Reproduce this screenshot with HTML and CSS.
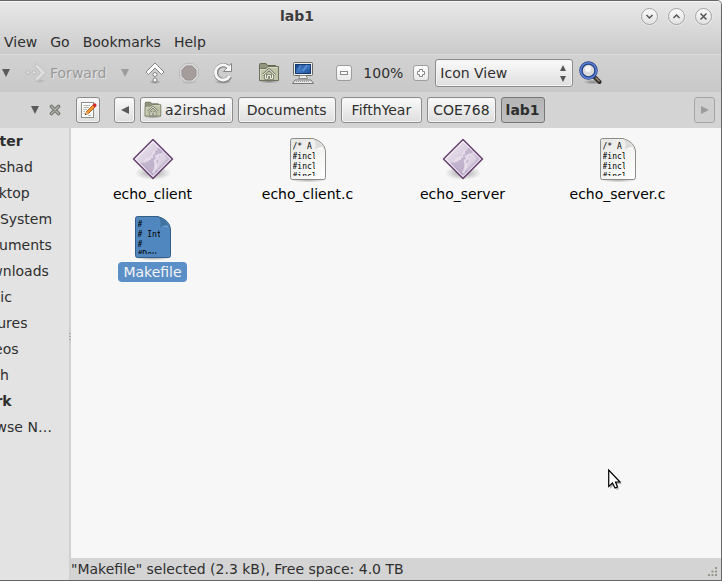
FILE: index.html
```html
<!DOCTYPE html>
<html lang="en">
<head>
<meta charset="utf-8">
<title>lab1</title>
<link rel="stylesheet" href="styles.css">
</head>
<body>
<svg class="defs" width="0" height="0" aria-hidden="true">
  <defs>
    <linearGradient id="paper" x1="0" y1="0" x2="1" y2="1"><stop offset="0" stop-color="#e6e7e4"/><stop offset="1" stop-color="#fff"/></linearGradient>
    <linearGradient id="gem" x1="0" y1="0" x2="1" y2="1"><stop offset="0" stop-color="#f3eff5"/><stop offset=".5" stop-color="#d5c9dd"/><stop offset="1" stop-color="#b39fc0"/></linearGradient>
    <linearGradient id="screen" x1="0" y1="0" x2="1" y2="1"><stop offset="0" stop-color="#143f83"/><stop offset=".5" stop-color="#3d78c4"/><stop offset="1" stop-color="#1b4c96"/></linearGradient>
    <radialGradient id="shade"><stop offset="0" stop-color="#000" stop-opacity=".35"/><stop offset="1" stop-color="#000" stop-opacity="0"/></radialGradient>
    <symbol id="down" viewBox="0 0 8 8"><path d="M0 0H8L4 8Z"/></symbol>
    <symbol id="folder" viewBox="0 0 22 22">
      <ellipse cx="11" cy="19.500" rx="11" ry="2" fill="url(#shade)"/>
      <path d="M1.500 18.500V2.500Q1.500 1.500 2.500 1.500H8L9.500 3.500H17.500V8" fill="#92957d" stroke="#64684f"/>
      <path d="M1.500 18.500V7.500Q1.500 6.500 2.500 6.500H8L10 4.500H20.500V18.500Z" fill="#bfc3a8" stroke="#6e735a"/>
      <path d="M2.500 17.500V7.500H8.500L10.500 5.500H19.500" fill="none" stroke="#d9dcc8"/>
      <path d="M5 13L11 7.500L17 13M7.500 12.500V16.500H9.500V13.500H12.500V16.500H14.500V12.500" fill="none" stroke="#7d816b" stroke-width="2.600"/>
      <path d="M5 13L11 7.500L17 13M7.500 12.500V16.500H9.500V13.500H12.500V16.500H14.500V12.500" fill="none" stroke="#f2f3ea"/>
    </symbol>
    <symbol id="program" viewBox="0 0 48 48">
      <ellipse cx="24" cy="37" rx="18" ry="7" fill="url(#shade)"/>
      <path d="M24 3.500L43.500 23L24 42.500L4.500 23Z" fill="url(#gem)" stroke="#65416f" stroke-width="1.500" stroke-linejoin="round"/>
      <path d="M13 27L17 22L22 20L25 14L30 13L34 17L38 23L30 31L24 38L17 31Z" fill="#fff" opacity=".3"/>
      <path d="M11 27l2 0 1-1 2 1 1-2 2 1 1-2 2 0 0-2 2 0 0-3 2-1 0-3 2-1 1-2 2 0 1 2 2 0 0 2-3 2 0 3-2 2 0 3-2 2-1 3 1 3 2 1-6 4-7-7Z" fill="#8a70a0" opacity=".35"/>
      <path d="M26 20q3 1 5-2M24 37q4-6 2-12q2-3 4-4" fill="none" stroke="#f5f0f8" stroke-width="2.500" opacity=".65"/>
      <path d="M24 5.500L41.500 23L24 40.500L6.500 23Z" fill="none" stroke="#fff" stroke-opacity=".75"/>
    </symbol>
    <symbol id="source" viewBox="0 0 38 46">
      <ellipse cx="19" cy="42.500" rx="19" ry="3" fill="url(#shade)"/>
      <path d="M3.500 1.500H24Q35.500 5 36.500 14V40.500Q36.500 42.500 34.500 42.500H3.500Q1.500 42.500 1.500 40.500V3.500Q1.500 1.500 3.500 1.500Z" fill="url(#paper)" stroke="#8b8d88"/>
      <path d="M24.500 2Q28 6 26 12.500Q32 11 36 14.500Q33 5 24.500 2Z" fill="#dcddda"/>
      <path d="M26 12.500Q32 11 36 14.500L33 10Q30 10 26 12.500Z" fill="#fff"/>
    </symbol>
  </defs>
</svg>
<div class="window">
  <header class="titlebar">
    <h1>lab1</h1>
    <div class="controls">
      <button aria-label="Minimize"><svg width="9" height="9"><path d="M1.500 3L4.500 6L7.500 3"/></svg></button>
      <button aria-label="Maximize"><svg width="9" height="9"><path d="M1.500 6L4.500 3L7.500 6"/></svg></button>
      <button aria-label="Close"><svg width="9" height="9"><path d="M1.500 1.500L7.500 7.500M7.500 1.500L1.500 7.500"/></svg></button>
    </div>
  </header>
  <nav class="menubar" aria-label="Menu">
    <button>View</button><button>Go</button><button>Bookmarks</button><button>Help</button>
  </nav>
  <div class="toolbar">
    <button aria-label="Back history"><svg class="tri" width="8" height="8"><use href="#down"/></svg></button>
    <button class="forward" disabled>
      <svg width="22" height="22" viewBox="0 0 22 22"><ellipse cx="15" cy="19" rx="6" ry="2" fill="url(#shade)" opacity=".4"/><path d="M9.500 4L12 1.500L21 10.500L12 19.500L9.500 17L15.500 10.500Z" fill="#dedede" stroke="#bababa" stroke-linejoin="round"/><circle cx="3" cy="10.500" r="2" fill="#dcdcdc" stroke="#bababa"/><circle cx="9" cy="10.500" r="2" fill="#dcdcdc" stroke="#bababa"/></svg>
      <span>Forward</span>
    </button>
    <button class="forward-history" aria-label="Forward history" disabled><svg class="tri" width="8" height="8"><use href="#down"/></svg></button>
    <button class="tool" aria-label="Up"><svg width="22" height="22" viewBox="0 0 22 22"><ellipse cx="11" cy="20" rx="6" ry="2" fill="url(#shade)"/><path d="M11 1L20 10L17.500 12.500L11 6L4.500 12.500L2 10Z" fill="#fff" stroke="#858585" stroke-linejoin="round"/><circle cx="11" cy="12.500" r="2" fill="#fff" stroke="#858585"/><circle cx="11" cy="18" r="2" fill="#fff" stroke="#858585"/></svg></button>
    <button class="tool stop" aria-label="Stop" disabled><svg width="22" height="22" viewBox="0 0 22 22"><ellipse cx="11" cy="20" rx="9" ry="2" fill="url(#shade)" opacity=".5"/><path d="M7 1.500H15L20.500 7V15L15 20H7L1.500 15V7Z" fill="#d6d6d6" stroke="#bcbcbc"/><path d="M8 4H14L18 8V14L14 18H8L4 14V8Z" fill="#a59c9c" stroke="#989090"/></svg></button>
    <button class="tool" aria-label="Reload"><svg width="22" height="22" viewBox="0 0 22 22"><ellipse cx="11" cy="20" rx="9" ry="2" fill="url(#shade)"/><path d="M18 14.500A7.500 7.500 0 1 1 15.500 4.500" fill="none" stroke="#858585" stroke-width="4.600"/><path d="M19.500 1.500V9.500H11.500L13.500 7.500L17.500 3Z" fill="#f8f8f8" stroke="#858585" stroke-linejoin="round"/><path d="M17.600 14A7.500 7.500 0 1 1 15.500 4.500L17 6" fill="none" stroke="#f8f8f8" stroke-width="2.800"/></svg></button>
    <button class="tool home" aria-label="Home"><svg width="22" height="22"><use href="#folder"/></svg></button>
    <button class="tool" aria-label="Computer"><svg width="22" height="22" viewBox="0 0 22 22"><rect x="1.500" y=".5" width="19" height="13" rx="1" fill="#eeeeec" stroke="#666961"/><rect x="3.500" y="2.500" width="15" height="9" fill="url(#screen)" stroke="#16396f"/><path d="M6 8L9 3M11 9L15 3" stroke="#7caee8" stroke-width="1.500" opacity=".5"/><path d="M8 13.500H14L15.500 16.500H6.500Z" fill="#eee" stroke="#888a85"/><path d="M3 18H19L21.500 21.500H.5Z" fill="#e8e8e6" stroke="#777"/><path d="M4 19.500H18" stroke="#999" stroke-dasharray="1 1"/></svg></button>
    <button class="zoom" aria-label="Zoom out"><svg width="16" height="16"><rect x="4.500" y="6.500" width="7" height="3"/></svg></button>
    <span class="level">100%</span>
    <button class="zoom" aria-label="Zoom in"><svg width="16" height="16"><path d="M6.500 4.500H9.500V6.500H11.500V9.500H9.500V11.500H6.500V9.500H4.500V6.500H6.500Z"/></svg></button>
    <div class="view">
      <select aria-label="View mode"><option>Icon View</option></select>
      <svg width="8" height="18" viewBox="0 0 8 18" aria-hidden="true"><path d="M1 6L4 0L7 6ZM1 11H7L4 17Z"/></svg>
    </div>
    <button class="search" aria-label="Search"><svg width="24" height="24" viewBox="0 0 24 24"><ellipse cx="14" cy="21" rx="10" ry="2.500" fill="url(#shade)"/><path d="M15.500 16L20.500 21" stroke="#2d2a26" stroke-width="4" stroke-linecap="round"/><path d="M16.500 16.500L20.500 20.500" stroke="#9b8c78" stroke-width="1.500"/><circle cx="9.500" cy="9.500" r="7.500" fill="#dcdcdc" fill-opacity=".9" stroke="#233f86" stroke-width="3.500"/><circle cx="9.500" cy="9.500" r="7.800" fill="none" stroke="#5f84d8" stroke-width="1.500"/><circle cx="9" cy="8" r="3" fill="#fff" opacity=".7"/></svg></button>
  </div>
  <div class="location">
    <button class="side-menu" aria-label="Side pane menu"><svg class="tri" width="8" height="8"><use href="#down"/></svg></button>
    <button class="side-close" aria-label="Close side pane"><svg width="12" height="12" viewBox="0 0 12 12"><g stroke-linecap="round"><path d="M2.500 2.500L9.500 9.500M9.500 2.500L2.500 9.500" stroke="#73766f" stroke-width="3.600"/><path d="M2.500 2.500L9.500 9.500M9.500 2.500L2.500 9.500" stroke="#b4b6b0" stroke-width="1.400"/></g></svg></button>
    <button class="box edit" aria-label="Edit location"><svg width="18" height="18" viewBox="0 0 18 18"><rect x="2.500" y="1.500" width="12" height="15" fill="#fff" stroke="#8c8e89"/><path d="M4.500 4.500H11M4.500 6.500H10M4.500 8.500H8M4.500 10.500H6M4.500 12.500H6M9 14.500H12" stroke="#b5b7b2"/><path d="M6.500 13.500L7.500 10.500L14 4L16 6L9.500 12.500Z" fill="#f4952b" stroke="#a14b10" stroke-width=".8"/><path d="M13.500 4L15 2.500Q16 2 17 3Q18 4 17.300 5L16 6.500Z" fill="#d3262b"/><path d="M6 14L7.300 11L9 12.700Z" fill="#e8cfa0"/><path d="M5.800 14.200L6.500 12.500L7.500 13.500Z" fill="#222"/></svg></button>
    <button class="box step" aria-label="Scroll left"><svg class="tri" width="8" height="8"><path d="M8 0V8L0 4Z"/></svg></button>
    <button class="box user"><svg width="18" height="18"><use href="#folder"/></svg>a2irshad</button>
    <button class="box">Documents</button>
    <button class="box year">FifthYear</button>
    <button class="box code">COE768</button>
    <button class="box current" aria-current="page">lab1</button>
    <button class="box step last" aria-label="Scroll right" disabled><svg class="tri" width="8" height="8"><path d="M0 0V8L8 4Z"/></svg></button>
  </div>
  <div class="body">
    <aside class="places">
      <h2>Computer</h2>
      <ul>
        <li>a2irshad</li><li>Desktop</li><li>File System</li><li>Documents</li><li>Downloads</li>
        <li>Music</li><li>Pictures</li><li>Videos</li><li>Trash</li>
      </ul>
      <h2>Network</h2>
      <ul><li>Browse N…</li></ul>
    </aside>
    <div class="splitter"><i></i><i></i><i></i></div>
    <div class="content">
      <main class="files">
        <figure><svg width="48" height="48"><use href="#program"/></svg><figcaption>echo_client</figcaption></figure>
        <figure>
          <div class="doc"><svg width="38" height="46"><use href="#source"/></svg><pre>/* A
#incl
#incl
#incl</pre></div>
          <figcaption>echo_client.c</figcaption>
        </figure>
        <figure><svg width="48" height="48"><use href="#program"/></svg><figcaption>echo_server</figcaption></figure>
        <figure>
          <div class="doc"><svg width="38" height="46"><use href="#source"/></svg><pre>/* A
#incl
#incl
#incl</pre></div>
          <figcaption>echo_server.c</figcaption>
        </figure>
        <figure class="selected">
          <div class="doc"><svg width="38" height="46" viewBox="0 0 38 46"><ellipse cx="19" cy="42.500" rx="19" ry="3" fill="url(#shade)"/><path d="M3.500 1.500H24Q35.500 5 36.500 14V40.500Q36.500 42.500 34.500 42.500H3.500Q1.500 42.500 1.500 40.500V3.500Q1.500 1.500 3.500 1.500Z" fill="#5087bf" stroke="#355e86"/><path d="M24.500 2Q28 6 26 12.500Q32 11 36 14.500Q33 5 24.500 2Z" fill="#41719f"/><path d="M26 12.500Q32 11 36 14.500L33 10Q30 10 26 12.500Z" fill="#6a9dd2"/></svg><pre>#
# Int
#
#Dev...</pre></div>
          <figcaption>Makefile</figcaption>
        </figure>
      </main>
      <footer class="status">
        <span>"Makefile" selected (2.3 kB), Free space: 4.0 TB</span>
        <svg width="10" height="10" viewBox="0 0 10 10" fill="#94968a"><path d="M7 0h2v2h-2zM3.500 3.500h2v2h-2zM7 3.500h2v2h-2zM0 7h2v2h-2zM3.500 7h2v2h-2zM7 7h2v2h-2z"/></svg>
      </footer>
    </div>
  </div>
</div>
<svg class="pointer" width="16" height="22" viewBox="0 0 16 22" aria-hidden="true"><path d="M2 3V20L6 16L8.500 21L11 20L9 15H14Z" fill="#000" opacity=".25"/><path d="M.7 1V17.500L4.500 14L7 19L9.500 18L7.500 13H12Z" fill="#fff" stroke="#000" stroke-width="1.200"/></svg>
</body>
</html>
```
FILE: styles.css
```css
* { box-sizing: border-box; }

body {
  margin: 0;
  background: #fff;
  color: #2e2e2e;
  font: 14px/20px "DejaVu Sans", sans-serif;
}

svg { display: block; flex: none; }
.defs { position: absolute; }
h1, h2, ul, figure, pre { margin: 0; padding: 0; font-size: inherit; }
ul { list-style: none; }

button {
  margin: 0;
  padding: 0;
  border: 0;
  background: none;
  color: inherit;
  font: inherit;
  display: flex;
  align-items: center;
  justify-content: center;
  white-space: nowrap;
}

.window {
  min-height: 100vh;
  display: flex;
  flex-direction: column;
  background: #d4d4d4;
  border: 1px solid #666;
  border-left: 0;
  border-top-right-radius: 5px;
  overflow: hidden;
}

.titlebar {
  height: 29px;
  display: flex;
  align-items: center;
  background: linear-gradient(#e7e7e7, #d8d8d8);
  border-top: 1px solid #f6f6f6;
  padding: 0 9px 0 280px;
}
.titlebar h1 { flex: 1; color: #3c3c3c; text-shadow: 0 1px #eee; }
.controls { display: flex; gap: 10px; }
.controls button {
  width: 17px;
  height: 17px;
  border: 1px solid #a2a2a2;
  border-radius: 50%;
  background: linear-gradient(#fafafa, #e2e2e2);
  box-shadow: 0 0 0 1px #e6e6e6;
}
.controls path { fill: none; stroke: #555; stroke-width: 1.5; }

.menubar {
  height: 24px;
  display: flex;
  gap: 13px;
  padding: 0 4px;
  background: linear-gradient(#d8d8d8, #cbcbcb);
}

.toolbar {
  height: 38px;
  display: flex;
  align-items: center;
  padding-left: 2px;
  border-top: 1px solid #dcdcdc;
  border-bottom: 1px solid #c8c8c8;
  background: linear-gradient(#d2d2d2, #c9c9c9);
}
.tri { fill: #5b5b5b; }
button:disabled .tri { fill: #9c9c9c; }
.forward { margin-left: 15px; gap: 3px; color: #999; text-shadow: 1px 1px #e6e6e6; }
.forward-history { margin: 0 15px; }
.tool { margin-right: 12px; }
.tool.home { margin-left: 12px; }
.zoom {
  margin-left: 10px;
  width: 16px;
  height: 16px;
  border-radius: 3px;
  background: linear-gradient(#fff, #e8e8e8);
  box-shadow: inset 0 0 0 1px #9c9e99;
}
.zoom svg { fill: #fff; stroke: #888; }
.level { margin-left: 11px; }
.view { margin-left: 6px; position: relative; }
.view select {
  appearance: none;
  width: 138px;
  height: 28px;
  padding: 0 4px;
  color: inherit;
  font: inherit;
}
.view svg { position: absolute; right: 6px; top: 6px; fill: #555; }
.search { margin-left: 6px; }

.box, .view select {
  border: 1px solid #8c8c8c;
  border-radius: 3px;
  background: linear-gradient(#fafafa, #dedede);
  box-shadow: inset 0 0 0 1px #f4f4f4;
}

.location {
  height: 36px;
  display: flex;
  align-items: center;
  gap: 5px;
  padding: 0 6px 0 31px;
}
.box { height: 26px; padding: 0 8px; }
.side-close { margin-left: 5px; }
.box.edit { width: 24px; margin: 0 9px 0 10px; padding: 0; }
.box.step { width: 21px; padding: 0; }
.box.user { padding: 0 6px 0 3px; gap: 3px; }
.box.year { padding: 0 10px; }
.box.code { padding: 0 5px; }
.box.current {
  padding: 0 4px;
  border-color: #777;
  background: linear-gradient(#b5b5b5, #c0c0c0);
  box-shadow: none;
  font-weight: bold;
}
.box.last { margin-left: auto; background: #cfcfcf; border-color: #a5a5a5; box-shadow: none; }

.body { flex: 1; display: flex; }
.places {
  width: 69px;
  overflow: hidden;
  background: #e3e3e3;
  line-height: 26px;
  white-space: nowrap;
}
.places h2 { margin-left: -55px; }
.places li { margin-left: -28px; }
.splitter {
  width: 2px;
  display: flex;
  flex-direction: column;
  justify-content: center;
  gap: 2px;
  padding-bottom: 36px;
  background: #d0d0d0;
}
.splitter i { height: 1px; background: #aaa; }

.content { flex: 1; display: flex; flex-direction: column; }
.files {
  flex: 1;
  display: grid;
  grid-template-columns: repeat(auto-fill, 155px);
  grid-auto-rows: 68px;
  row-gap: 10px;
  padding: 8px 4px;
  background: #f7f7f7;
  color: #000;
}
figure { display: flex; flex-direction: column; align-items: center; }
figcaption { padding: 0 5px; border-radius: 4px; }
.doc { height: 48px; padding-top: 1px; position: relative; }
.doc pre {
  position: absolute;
  left: 4px;
  top: 6px;
  width: 22px;
  height: 34px;
  overflow: hidden;
  font: 8px/10px "DejaVu Sans Mono", monospace;
}
.selected figcaption { background: #5b8fc7; color: #f4f4f4; }

.status {
  height: 22px;
  display: flex;
  align-items: center;
  justify-content: space-between;
  padding-right: 3px;
}
.status svg { align-self: flex-end; margin-bottom: 3px; }

.pointer { position: absolute; left: 608px; top: 469px; }
```
